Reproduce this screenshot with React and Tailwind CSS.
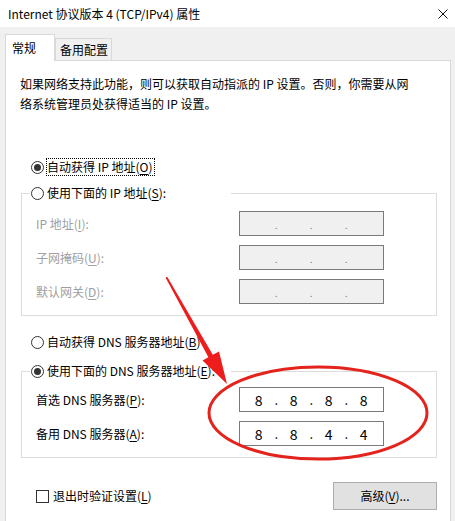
import React from "react";

const K = ({ c }) => <span className="underline underline-offset-[2px]">{c}</span>;

function Radio({ checked }) {
  return (
    <span className="w-[13px] h-[13px] shrink-0 rounded-full border border-[#333333] bg-white flex items-center justify-center">
      {checked && <span className="w-[7px] h-[7px] rounded-full bg-[#333333]" />}
    </span>
  );
}

function IpBox({ vals, disabled }) {
  const cells = vals
    ? [vals[0], ".", vals[1], ".", vals[2], ".", vals[3]]
    : ["", ".", "", ".", "", ".", ""];
  return (
    <div
      className={
        "w-[145px] h-[25px] border border-[#7a7a7a] grid grid-cols-[repeat(7,17.5px)] pl-[10px] items-center " +
        (disabled ? "bg-[#f0f0f0] text-[#7a7a7a]" : "bg-white text-black")
      }
    >
      {cells.map((c, i) => (
        <span
          key={i}
          className={
            "text-center leading-[20px] " +
            (c === "." ? (disabled ? "text-[10px] pt-[2px]" : "text-[13px]") : "text-[14px]")
          }
        >
          {c}
        </span>
      ))}
    </div>
  );
}

function Row({ label, vals, disabled, first }) {
  return (
    <div className={"flex items-center h-[25px] " + (first ? "" : "mt-[9px]")}>
      <div className={"w-[217px] pl-[14px] leading-[20px] " + (disabled ? "text-[#a0a0a0]" : "text-black")}>
        {label}
      </div>
      <IpBox vals={vals} disabled={disabled} />
    </div>
  );
}

export default function App() {
  return (
    <div className="relative w-[455px] h-[521px] overflow-hidden bg-[#f0f0f0] text-[12px] text-black font-['Noto_Sans_CJK_SC',sans-serif]">
      {/* title bar */}
      <div className="h-[27px] bg-white flex items-center justify-between pl-[8px] pr-[7px]">
        <span className="leading-[20px]">Internet 协议版本 4 (TCP/IPv4) 属性</span>
        <svg width="10" height="10" viewBox="0 0 10 10" className="mt-[1px]">
          <path d="M0.5 0.5 L9.5 9.5 M9.5 0.5 L0.5 9.5" stroke="#111" strokeWidth="1" />
        </svg>
      </div>

      {/* tabs */}
      <div className="h-[33px] flex items-end pl-[5px]">
        <div className="relative z-10 -mb-[1px] w-[50px] h-[27px] bg-white border-l border-t border-r border-[#d9d9d9] flex items-center pl-[6px]">
          <span className="leading-[20px]">常规</span>
        </div>
        <div className="w-[57px] h-[22px] bg-[#f0f0f0] border-l border-t border-r border-[#d9d9d9] flex items-center pl-[4px]">
          <span className="leading-[20px]">备用配置</span>
        </div>
      </div>

      {/* panel */}
      <div className="ml-[5px] w-[446px] h-[470px] bg-white border border-[#d9d9d9]">
        <p className="mt-[13px] ml-[14px] leading-[20px]">
          如果网络支持此功能，则可以获取自动指派的 IP 设置。否则，你需要从网
          <br />
          络系统管理员处获得适当的 IP 设置。
        </p>

        <div className="mt-[43px] ml-[25px] h-[20px] flex items-center">
          <Radio checked />
          <span className="ml-[2px] border border-dotted border-black h-[18px] flex items-center pr-[1px] leading-[16px]">
            自动获得 IP 地址(<K c="O" />)
          </span>
        </div>

        {/* group 1 */}
        <div className="mt-[16px] ml-[15px] w-[416px] border border-[#dcdcdc] pb-[11px]">
          <div className="-mt-[11px] ml-[8px] w-[201px] h-[20px] bg-white flex items-center pl-[1px]">
            <Radio />
            <span className="ml-[3px] leading-[20px]">
              使用下面的 IP 地址(<K c="S" />):
            </span>
          </div>
          <div className="mt-[8px]">
            <Row first disabled label={<>IP 地址(<K c="I" />):</>} />
            <Row disabled label={<>子网掩码(<K c="U" />):</>} />
            <Row disabled label={<>默认网关(<K c="D" />):</>} />
          </div>
        </div>

        <div className="mt-[16px] ml-[25px] h-[20px] flex items-center">
          <Radio />
          <span className="ml-[3px] leading-[20px] whitespace-nowrap">
            自动获得 DNS 服务器地址(<K c="B" />)
          </span>
        </div>

        {/* group 2 */}
        <div className="mt-[19px] ml-[15px] w-[416px] border border-[#dcdcdc] pb-[11px]">
          <div className="-mt-[11px] ml-[8px] w-[201px] h-[20px] bg-white flex items-center pl-[1px]">
            <Radio checked />
            <span className="ml-[3px] leading-[20px] whitespace-nowrap">
              使用下面的 DNS 服务器地址(<K c="E" />):
            </span>
          </div>
          <div className="mt-[6px]">
            <Row first label={<>首选 DNS 服务器(<K c="P" />):</>} vals={["8", "8", "8", "8"]} />
            <Row label={<>备用 DNS 服务器(<K c="A" />):</>} vals={["8", "8", "4", "4"]} />
          </div>
        </div>

        {/* bottom */}
        <div className="mt-[24px] h-[28px] flex items-center">
          <span className="ml-[30px] w-[13px] h-[13px] border border-[#333333] bg-white" />
          <span className="ml-[4px] leading-[20px]">
            退出时验证设置(<K c="L" />)
          </span>
          <button className="ml-auto mr-[13px] w-[104px] h-[28px] bg-[#e1e1e1] border border-[#adadad] flex items-center justify-center leading-[20px]">
            高级(<K c="V" />)...
          </button>
        </div>
      </div>

      {/* annotation overlay */}
      <svg
        className="absolute inset-0 pointer-events-none"
        width="455"
        height="521"
        viewBox="0 0 455 521"
      >
        <ellipse cx="318" cy="413" rx="109" ry="46" fill="none" stroke="#e3231c" strokeWidth="3" />
        <polygon
          points="165.5,277.5 167.2,276.7 212.8,354.8 219,351.5 227,384 202.5,360.6 208.4,357.2"
          fill="#ee1d1d"
        />
      </svg>
    </div>
  );
}
